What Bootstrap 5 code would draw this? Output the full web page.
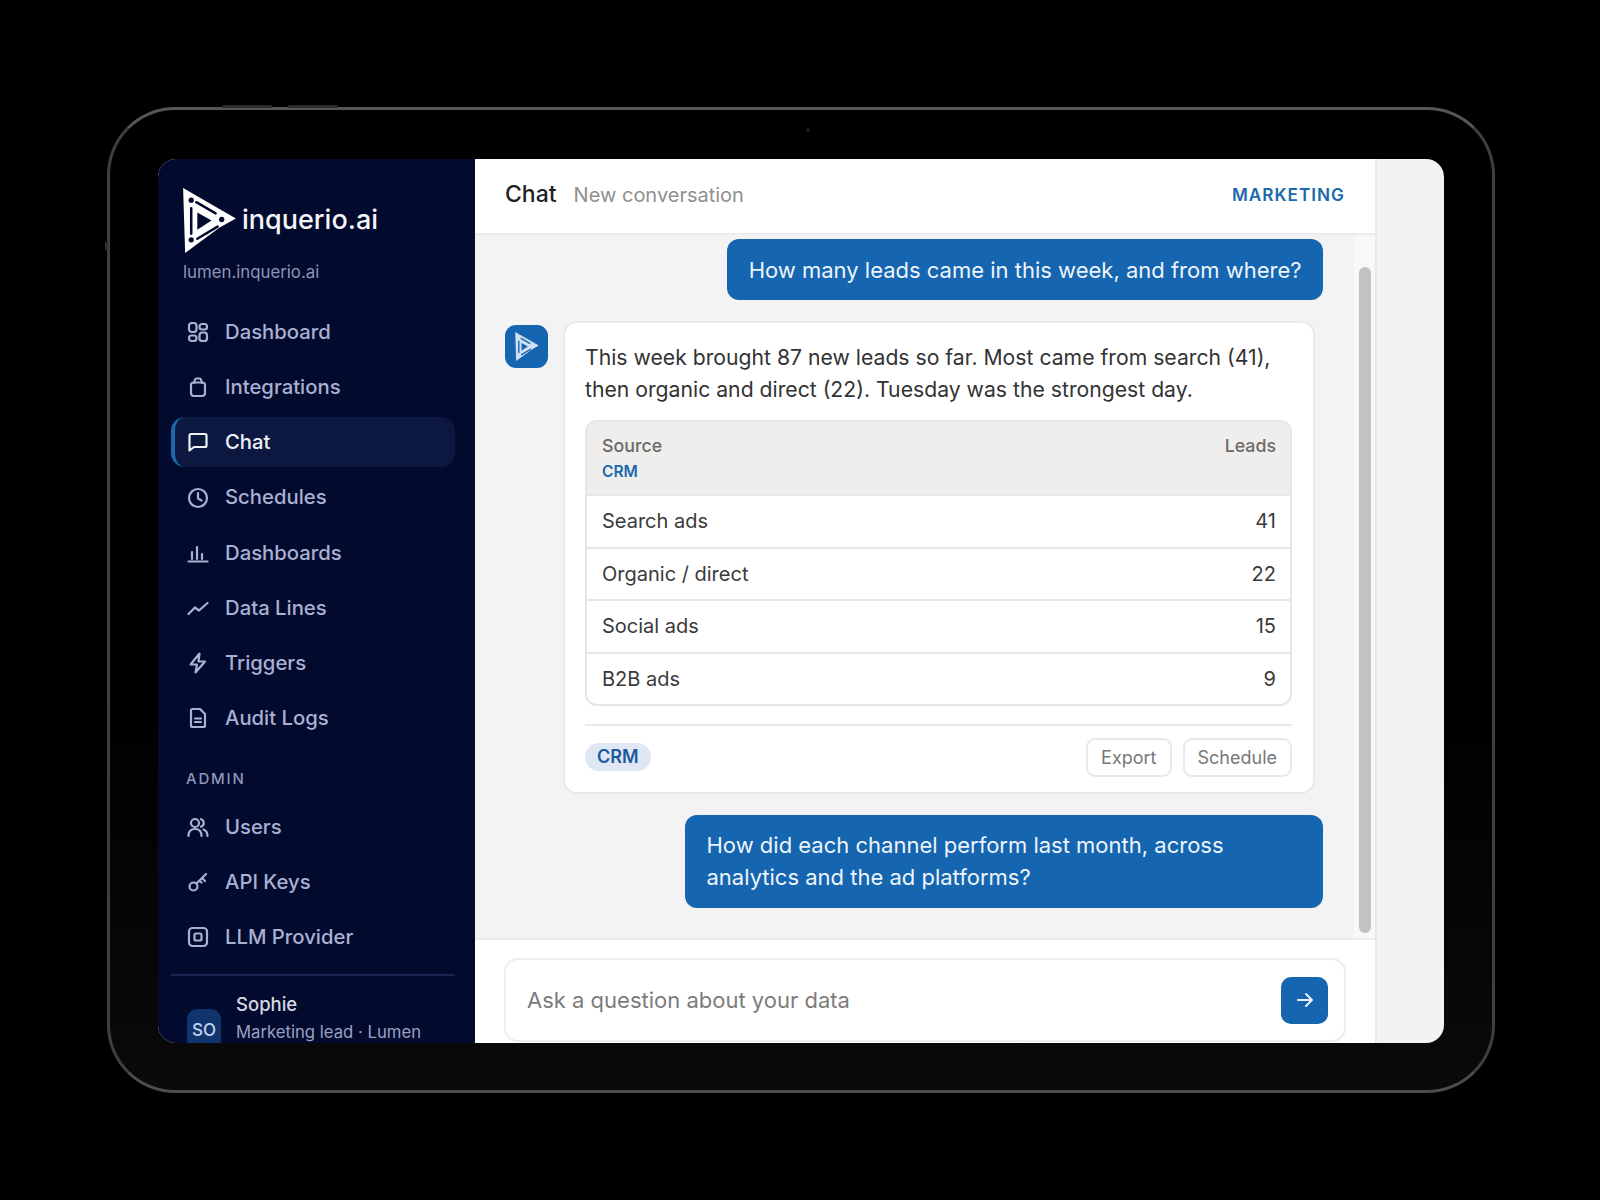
<!DOCTYPE html>
<html lang="en">
<head>
  <meta charset="UTF-8" />
  <meta name="viewport" content="width=device-width, initial-scale=1.0"/>
  <title>inquerio.ai - Chat</title>
  <link href="https://cdn.jsdelivr.net/npm/bootstrap@5.3.3/dist/css/bootstrap.min.css" rel="stylesheet"/>
  <style>
    body {
      font-family: Inter, "Liberation Sans", sans-serif;
      background: #000;
      height: 1200px;
      overflow: hidden;
    }

    /* tablet shell */
    .tablet-shell {
      width: 1388px;
      height: 986px;
      margin: 107px 0 0 107px;
      padding: 49px 48px;
      background: linear-gradient(#000 60%, #0a0a0a);
      border: 3px solid #3f3f3f;
      border-top-color: #565656;
      border-bottom-color: #4c4c4c;
      border-radius: 68px;
      position: relative;
    }
    .hw-btn {
      position: absolute;
      top: -5px;
      height: 3px;
      width: 50px;
      background: #2c2c2c;
      border-radius: 2px;
    }
    .hw-btn-a { left: 112px; }
    .hw-btn-b { left: 178px; }
    .hw-side {
      position: absolute;
      left: -5px;
      top: 132px;
      width: 3px;
      height: 8px;
      background: #2c2c2c;
    }
    .hw-cam {
      position: absolute;
      top: 18px;
      left: 696px;
      width: 4px;
      height: 4px;
      border-radius: 50%;
      background: #1b1b1b;
    }
    .tablet-screen {
      height: 884px;
      border-radius: 18px;
      overflow: hidden;
      background: #f2f2f2;
    }

    /* sidebar */
    .side-pane {
      width: 317px;
      flex: none;
      background: #020a2e;
      padding: 29px 20px 0 13px;
      color: #a9b1d2;
    }
    .brand-row { padding-left: 12px; height: 65px; }
    .brand-name {
      color: #f4f5f8;
      font-size: 27px;
      font-weight: 500;
      margin-left: 6px;
    }
    .brand-sub {
      padding-left: 12px;
      margin-top: 9px;
      font-size: 16.800px;
      line-height: 20px;
      color: #8d95b8;
    }
    .side-nav { gap: 5px; }
    .side-nav-top { margin-top: 25px; gap: 5.200px; }
    .side-link {
      display: flex;
      align-items: center;
      gap: 16px;
      height: 50px;
      padding-left: 12px;
      color: #a9b1d2;
      font-size: 20.300px;
      font-weight: 500;
      text-decoration: none;
      border-radius: 14px;
      border-left: 4px solid transparent;
    }
    .side-link svg {
      width: 22px;
      height: 22px;
      flex: none;
      fill: none;
      stroke: currentColor;
      stroke-width: 2.200;
      stroke-linecap: round;
      stroke-linejoin: round;
    }
    .side-link.active {
      color: #eef0f6;
      background: #0c1840;
      border-left-color: #1a68ae;
    }
    .side-caption {
      margin: 26px 0 13px 15px;
      font-size: 15px;
      line-height: 20px;
      font-weight: 500;
      letter-spacing: 1.800px;
      color: #8f97b8;
    }
    .side-user {
      margin-top: 12px;
      padding: 16px 0 0 16px;
      border-top: 2px solid #1a2450;
      gap: 15px;
    }
    .user-chip {
      width: 34px;
      height: 42px;
      margin-top: 17px;
      background: #10356e;
      color: #c5d3ec;
      font-size: 17px;
      font-weight: 500;
      border-radius: 10px;
    }
    .user-name { color: #d6d9e4; font-size: 18.500px; line-height: 24px; font-weight: 500; }
    .user-role { font-size: 16.700px; line-height: 22px; margin-top: 5px; color: #99a1c2; }

    /* main column */
    .main-pane {
      width: 902px;
      flex: none;
      background: #fff;
      border-right: 2px solid #e9e9e9;
    }
    .top-bar {
      height: 76px;
      padding: 0 30px 3px 30px;
      border-bottom: 2px solid #ececec;
    }
    .top-title { font-size: 23px; font-weight: 500; color: #222; }
    .top-sub { font-size: 20px; color: #8f8f8f; margin-left: 17px; }
    .top-tag { font-size: 17.200px; font-weight: 600; letter-spacing: 1px; color: #1a68ae; }

    .chat-area {
      height: 703px;
      background: #f3f3f3;
    }
    .chat-flow {
      padding: 4px 31px 0 30px;
      gap: 21px;
    }
    .chat-track {
      width: 21px;
      flex: none;
      background: #f8f8f8;
      padding: 32px 4px 5px 5px;
    }
    .chat-thumb { height: 100%; background: #c2c2c2; border-radius: 6px; }

    .bubble-me {
      align-self: flex-end;
      background: #1565b0;
      color: #edf4fb;
      font-size: 22px;
      line-height: 32px;
      padding: 14.500px 21.500px;
      border-radius: 12px;
    }
    .bubble-wide { width: 638px; }
    .bot-chip {
      width: 43px;
      height: 43px;
      flex: none;
      margin-top: 4px;
      background: #1565b0;
      border-radius: 11px;
    }
    .bot-card {
      margin: 0 8px 0 15px;
      border: 2px solid #e9e9e9;
      border-radius: 14px;
      padding: 18px 21px 15px 20px;
      color: #333;
    }
    .bot-text { font-size: 21.200px; line-height: 32px; margin-bottom: 15px; }
    .lead-wrap {
      border: 2px solid #e6e6e4;
      border-radius: 12px;
      overflow: hidden;
    }
    .lead-table { margin: 0; font-size: 20px; color: #3a3a3a; }
    .lead-table th {
      background: #efeeec;
      font-weight: 500;
      font-size: 17.800px;
      line-height: 26px;
      color: #6a6a6a;
      height: 73px;
      vertical-align: top;
      padding: 11px 14px 7px 15px;
      border-bottom: 2px solid #e6e6e4;
    }
    .lead-table td {
      height: 52.500px;
      padding: 0 14px 0 15px;
      vertical-align: middle;
      border-bottom: 2px solid #e6e6e4;
    }
    .lead-table tr:last-child td { border-bottom: 0; height: 51px; }
    .crm-link { display: block; color: #1a68ae; font-size: 15.500px; font-weight: 600; }
    .card-foot { margin-top: 18px; padding-top: 12px; border-top: 2px solid #e9e9e9; }
    .crm-pill {
      background: #dfe6f5;
      color: #1d5a9c;
      font-size: 18px;
      font-weight: 600;
      padding: 4px 12px;
      border-radius: 14px;
      line-height: 20px;
    }
    .ghost-btn {
      height: 39px;
      padding: 0 13px;
      font-size: 18px;
      line-height: 35px;
      color: #777;
      background: #fff;
      border: 2px solid #e9e9e9;
      border-radius: 9px;
    }
    .ghost-btn + .ghost-btn { margin-left: 11px; }

    .compose-bar {
      height: 105px;
      padding: 18px 29px 0 29px;
      border-top: 2px solid #ececec;
    }
    .compose-box {
      height: 84px;
      border: 2px solid #eeeeee;
      border-radius: 14px;
      padding: 0 16px 0 21px;
    }
    .compose-input {
      padding: 0;
      border: 0;
      font-size: 22px;
      color: #444;
      background: transparent;
    }
    .compose-input::placeholder { color: #7c7c7c; }
    .send-btn {
      width: 47px;
      height: 47px;
      flex: none;
      padding: 0;
      background: #1565b0;
      border: 0;
      border-radius: 10px;
    }
  </style>
</head>
<body>

  <div class="tablet-shell">
    <span class="hw-btn hw-btn-a"></span>
    <span class="hw-btn hw-btn-b"></span>
    <span class="hw-side"></span>
    <span class="hw-cam"></span>

    <div class="tablet-screen d-flex">

      <!-- Sidebar -->
      <aside class="side-pane">
        <div class="brand-row d-flex align-items-center">
          <svg width="53" height="65" viewBox="0 0 52 64" fill="none">
            <path d="M0 0 L52 30 L36 39 L2 64 Z" fill="#fff"/>
            <g stroke="#020a2e" stroke-width="2.500" stroke-linecap="round">
              <path d="M13 14 L32 25 M14 50 L34 38 M8 20 V45"/>
            </g>
            <path d="M14 24 L28 32 L14 41 Z" fill="#020a2e"/>
            <circle cx="8" cy="12" r="2.600" fill="#020a2e"/>
            <circle cx="38" cy="31" r="2.600" fill="#020a2e"/>
            <circle cx="8" cy="51" r="2.600" fill="#020a2e"/>
          </svg>
          <span class="brand-name">inquerio.ai</span>
        </div>
        <div class="brand-sub">lumen.inquerio.ai</div>

        <nav class="nav flex-column side-nav side-nav-top">
          <a class="side-link" href="#"><svg viewBox="0 0 22 22"><rect x="2" y="2" width="7.500" height="9" rx="2.800"/><rect x="12.500" y="3" width="7.500" height="5.500" rx="2.500"/><rect x="2" y="14.500" width="7.500" height="5.500" rx="2.500"/><rect x="12.500" y="11.500" width="7.500" height="8.500" rx="2.800"/></svg>Dashboard</a>
          <a class="side-link" href="#"><svg viewBox="0 0 22 22"><path d="M7 7 L8 3.500 a1.500 1.500 0 0 1 1.500-1 h3 a1.500 1.500 0 0 1 1.500 1 L15 7"/><path d="M4 9 a2.500 2.500 0 0 1 2.500-2.500 h9 A2.500 2.500 0 0 1 18 9 v8 a3 3 0 0 1-3 3 H7 a3 3 0 0 1-3-3 Z"/></svg>Integrations</a>
          <a class="side-link active" href="#"><svg viewBox="0 0 22 22"><path d="M2.500 4.500 a1.500 1.500 0 0 1 1.500-1.500 h14 a1.500 1.500 0 0 1 1.500 1.500 v10 a1.500 1.500 0 0 1-1.500 1.500 H7 l-4.500 3.500 Z"/></svg>Chat</a>
          <a class="side-link" href="#"><svg viewBox="0 0 22 22"><circle cx="11" cy="11" r="9"/><path d="M11 6 v5.500 l3.500 2"/></svg>Schedules</a>
          <a class="side-link" href="#"><svg viewBox="0 0 22 22"><path d="M1.500 19.500 H20.500 M5 17 V10 M10 17 V5 M15 17 V12"/></svg>Dashboards</a>
          <a class="side-link" href="#"><svg viewBox="0 0 22 22"><path d="M1.500 17 L8 10.500 L12 13.500 L20.500 6"/></svg>Data Lines</a>
          <a class="side-link" href="#"><svg viewBox="0 0 22 22"><path d="M12.500 1.500 L3.500 12.500 H10 L8.500 20.500 L18 9.500 H11.500 Z"/></svg>Triggers</a>
          <a class="side-link" href="#"><svg viewBox="0 0 22 22"><path d="M4 3.500 a1.500 1.500 0 0 1 1.500-1.500 H13 l5 5 v11.500 a1.500 1.500 0 0 1-1.500 1.500 h-11 A1.500 1.500 0 0 1 4 18.500 Z M8 11.500 h6 M8 15 h6"/></svg>Audit Logs</a>
        </nav>

        <div class="side-caption">ADMIN</div>

        <nav class="nav flex-column side-nav">
          <a class="side-link" href="#"><svg viewBox="0 0 22 22"><circle cx="8" cy="7" r="4"/><path d="M1.500 20 c0-4.500 2.500-7 6.500-7 s6.500 2.500 6.500 7"/><path d="M14 3.200 a4 4 0 0 1 0 7.600 M16.500 13.500 c2.500 1 4 3.200 4 6.500"/></svg>Users</a>
          <a class="side-link" href="#"><svg viewBox="0 0 22 22"><circle cx="6.500" cy="15.500" r="4"/><path d="M9.500 12.500 L19 3 M15 7 l3 3 M12.500 9.500 l2 2"/></svg>API Keys</a>
          <a class="side-link" href="#"><svg viewBox="0 0 22 22"><rect x="2" y="2" width="18" height="18" rx="3.500"/><rect x="7.500" y="7.500" width="7" height="7" rx="1.500"/></svg>LLM Provider</a>
        </nav>

        <div class="side-user d-flex">
          <div class="user-chip d-flex align-items-center justify-content-center flex-shrink-0">SO</div>
          <div>
            <div class="user-name">Sophie</div>
            <div class="user-role text-nowrap">Marketing lead · Lumen</div>
          </div>
        </div>
      </aside>

      <!-- Main -->
      <main class="main-pane d-flex flex-column">
        <header class="top-bar d-flex align-items-center flex-shrink-0">
          <span class="top-title">Chat</span>
          <span class="top-sub">New conversation</span>
          <span class="top-tag ms-auto">MARKETING</span>
        </header>

        <div class="chat-area d-flex flex-shrink-0 overflow-hidden">
          <div class="chat-flow d-flex flex-column flex-grow-1">
            <div class="bubble-me">How many leads came in this week, and from where?</div>

            <div class="d-flex align-items-start">
              <div class="bot-chip d-flex align-items-center justify-content-center">
                <svg width="24" height="29" viewBox="0 0 52 64" fill="none">
                  <path d="M0 0 L52 30 L36 39 L2 64 Z" fill="#cfe0f2"/>
                  <g stroke="#1565b0" stroke-width="3" stroke-linecap="round">
                    <path d="M13 14 L32 25 M14 50 L34 38 M8 20 V45"/>
                  </g>
                  <path d="M14 24 L28 32 L14 41 Z" fill="#1565b0"/>
                </svg>
              </div>
              <div class="card bot-card flex-grow-1">
                <p class="bot-text">This week brought 87 new leads so far. Most came from search (41), then organic and direct (22). Tuesday was the strongest day.</p>
                <div class="lead-wrap">
                  <table class="table lead-table">
                    <thead>
                      <tr>
                        <th>Source<span class="crm-link">CRM</span></th>
                        <th class="text-end">Leads</th>
                      </tr>
                    </thead>
                    <tbody>
                      <tr><td>Search ads</td><td class="text-end">41</td></tr>
                      <tr><td>Organic / direct</td><td class="text-end">22</td></tr>
                      <tr><td>Social ads</td><td class="text-end">15</td></tr>
                      <tr><td>B2B ads</td><td class="text-end">9</td></tr>
                    </tbody>
                  </table>
                </div>
                <div class="card-foot d-flex align-items-center">
                  <span class="crm-pill">CRM</span>
                  <button class="btn ghost-btn ms-auto" type="button">Export</button>
                  <button class="btn ghost-btn" type="button">Schedule</button>
                </div>
              </div>
            </div>

            <div class="bubble-me bubble-wide">How did each channel perform last month, across analytics and the ad platforms?</div>
          </div>
          <div class="chat-track"><div class="chat-thumb"></div></div>
        </div>

        <div class="compose-bar flex-shrink-0">
          <div class="compose-box d-flex align-items-center bg-white">
            <input class="form-control compose-input shadow-none" type="text" placeholder="Ask a question about your data">
            <button class="btn send-btn d-flex align-items-center justify-content-center" type="button">
              <svg width="18" height="18" viewBox="0 0 18 18" fill="none" stroke="#e8f0f9" stroke-width="2" stroke-linecap="round" stroke-linejoin="round"><path d="M2 9 H16 M10 3 L16 9 L10 15"/></svg>
            </button>
          </div>
        </div>
      </main>

    </div>
  </div>

  <script src="https://cdn.jsdelivr.net/npm/bootstrap@5.3.3/dist/js/bootstrap.bundle.min.js"></script>
</body>
</html>
